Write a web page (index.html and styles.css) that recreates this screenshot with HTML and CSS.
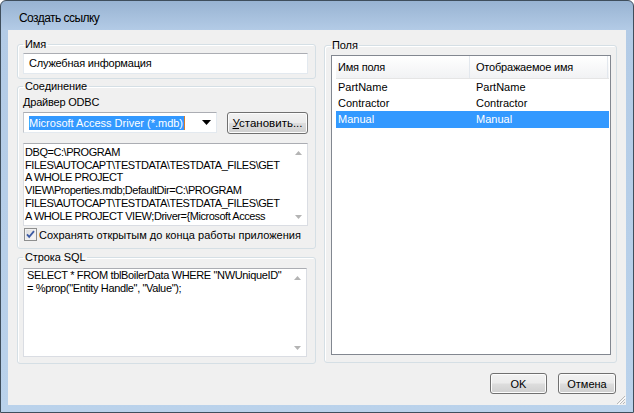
FILE: index.html
```html
<!DOCTYPE html>
<html lang="ru">
<head>
<meta charset="utf-8">
<title>Создать ссылку</title>
<link rel="stylesheet" href="styles.css">
</head>
<body>
<div class="window">
  <div class="titlebar">Создать ссылку</div>
  <div class="client">
    <div class="main">
      <div class="left">
        <fieldset class="grp grp-name">
          <legend>Имя</legend>
          <div class="textbox ru">Служебная информация</div>
        </fieldset>
        <fieldset class="grp grp-conn">
          <legend>Соединение</legend>
          <div class="label ru">Драйвер ODBC</div>
          <div class="driver-row">
            <div class="combo">
              <span class="combo-sel">Microsoft Access Driver (*.mdb)</span>
              <svg class="combo-arrow" width="9" height="5" viewBox="0 0 9 5"><path d="M0 0H9L4.5 5Z" fill="#000"/></svg>
            </div>
            <button class="btn btn-install"><u>У</u>становить...</button>
          </div>
          <div class="memo memo-conn">
            <div class="memo-text">DBQ=C:\PROGRAM<br>FILES\AUTOCAPT\TESTDATA\TESTDATA_FILES\GET<br>A WHOLE PROJECT<br>VIEW\Properties.mdb;DefaultDir=C:\PROGRAM<br>FILES\AUTOCAPT\TESTDATA\TESTDATA_FILES\GET<br>A WHOLE PROJECT VIEW;Driver={Microsoft Access</div>
            <div class="vscroll">
              <svg width="7" height="4" viewBox="0 0 7 4"><path d="M0 4L3.5 0L7 4Z" fill="#b4b4b4"/></svg>
              <svg width="7" height="4" viewBox="0 0 7 4"><path d="M0 0H7L3.5 4Z" fill="#b4b4b4"/></svg>
            </div>
          </div>
          <div class="check">
            <svg class="check-box" width="13" height="13" viewBox="0 0 13 13">
              <defs><linearGradient id="cb" x1="0" y1="0" x2="1" y2="1"><stop offset="0" stop-color="#dcdcdc"/><stop offset="1" stop-color="#fbfbfb"/></linearGradient></defs>
              <rect x="0.5" y="0.5" width="12" height="12" fill="#f4f4f4" stroke="#8e8f8f"/>
              <rect x="2" y="2" width="9" height="9" fill="url(#cb)" stroke="#e8e8e8" stroke-width="0.5"/>
              <path d="M3 6.3L5.2 8.8L10 3.2" fill="none" stroke="#3c5ba5" stroke-width="1.8"/>
            </svg>
            <span>Сохранять открытым до конца работы приложения</span>
          </div>
        </fieldset>
        <fieldset class="grp grp-sql">
          <legend>Строка SQL</legend>
          <div class="memo memo-sql">
            <div class="memo-text">SELECT * FROM tblBoilerData WHERE "NWUniqueID"<br>= %prop("Entity Handle", "Value");</div>
            <div class="vscroll">
              <svg width="7" height="4" viewBox="0 0 7 4"><path d="M0 4L3.5 0L7 4Z" fill="#b4b4b4"/></svg>
              <svg width="7" height="4" viewBox="0 0 7 4"><path d="M0 0H7L3.5 4Z" fill="#b4b4b4"/></svg>
            </div>
          </div>
        </fieldset>
      </div>
      <fieldset class="grp grp-fields">
        <legend>Поля</legend>
        <div class="listview">
          <div class="lv-header">
            <div class="lv-col1 ru">Имя поля</div>
            <div class="lv-col2 ru">Отображаемое имя</div>
          </div>
          <div class="lv-row"><div class="lv-col1">PartName</div><div class="lv-col2">PartName</div></div>
          <div class="lv-row"><div class="lv-col1">Contractor</div><div class="lv-col2">Contractor</div></div>
          <div class="lv-row selected"><div class="lv-col1">Manual</div><div class="lv-col2">Manual</div></div>
        </div>
      </fieldset>
    </div>
    <div class="buttons">
      <button class="btn btn-ok">OK</button>
      <button class="btn btn-cancel">Отмена</button>
    </div>
    <svg class="grip" width="10" height="10" viewBox="0 0 10 10">
      <g fill="#b8b8b8">
        <rect x="8" y="1" width="1" height="1"/><rect x="7" y="2" width="1" height="1"/><rect x="6" y="3" width="1" height="1"/><rect x="5" y="4" width="1" height="1"/><rect x="4" y="5" width="1" height="1"/><rect x="3" y="6" width="1" height="1"/><rect x="2" y="7" width="1" height="1"/><rect x="1" y="8" width="1" height="1"/>
        <rect x="8" y="4" width="1" height="1"/><rect x="7" y="5" width="1" height="1"/><rect x="6" y="6" width="1" height="1"/><rect x="5" y="7" width="1" height="1"/><rect x="4" y="8" width="1" height="1"/>
        <rect x="8" y="7" width="1" height="1"/><rect x="7" y="8" width="1" height="1"/>
      </g>
      <g fill="#ffffff">
        <rect x="9" y="2" width="1" height="1"/><rect x="8" y="3" width="1" height="1"/><rect x="7" y="4" width="1" height="1"/><rect x="6" y="5" width="1" height="1"/><rect x="5" y="6" width="1" height="1"/><rect x="4" y="7" width="1" height="1"/><rect x="3" y="8" width="1" height="1"/><rect x="2" y="9" width="1" height="1"/>
      </g>
    </svg>
  </div>
</div>
</body>
</html>
```
FILE: styles.css
```css
html, body {
  margin: 0;
  padding: 0;
}
body {
  width: 634px;
  height: 413px;
  overflow: hidden;
  background: #ffffff;
  font-family: "Liberation Sans", Arial, sans-serif;
  font-size: 11px;
  color: #000;
}
.ru {
  letter-spacing: -0.2px;
}
.window {
  box-sizing: border-box;
  width: 634px;
  height: 413px;
  border: 1px solid #3f4e5c;
  border-radius: 6px 6px 0 0;
  background: linear-gradient(#98b3d2 0px, #b3cbe6 29px, #bad2eb 100%);
  padding: 0 7px 7px 7px;
  display: flex;
  flex-direction: column;
}
.titlebar {
  height: 29px;
  box-sizing: border-box;
  padding: 10px 0 0 11px;
  line-height: 14px;
  font-size: 12px;
  letter-spacing: -0.55px;
  color: #000;
}
.client {
  position: relative;
  flex: 1;
  background: #f0f0f0;
  padding: 7px 9px 11px 9px;
  display: flex;
  flex-direction: column;
}
.main {
  display: flex;
  gap: 8px;
  height: 326px;
}
.left {
  width: 299px;
  display: flex;
  flex-direction: column;
}
.grp {
  margin: 0;
  border: 1px solid #d5dfe5;
  border-radius: 3px;
  padding: 0 7px 0 5px;
  min-width: 0;
  box-shadow: inset 1px 1px 0 #ffffff;
}
.grp legend {
  padding: 0 2px;
  line-height: 14px;
  height: 14px;
  letter-spacing: -0.1px;
}
.grp-name {
  padding-bottom: 4px;
}
.textbox {
  margin-top: 2px;
  box-sizing: border-box;
  height: 21px;
  background: #fff;
  border: 1px solid #e3e9ef;
  border-top-color: #abadb3;
  padding-left: 5px;
  line-height: 19px;
}
.grp-conn {
  padding-bottom: 6px;
}
.label {
  margin-top: 2px;
  line-height: 14px;
}
.driver-row {
  margin-top: 3px;
  display: flex;
  align-items: flex-start;
  gap: 10px;
}
.combo {
  box-sizing: border-box;
  width: 194px;
  height: 21px;
  background: #fff;
  border: 1px solid #e3e9ef;
  border-top-color: #abadb3;
  border-left-color: #c2c6cc;
  display: flex;
  align-items: center;
  padding-left: 5px;
  padding-right: 5px;
}
.combo-sel {
  background: #3399ff;
  color: #fff;
  line-height: 14px;
  padding-right: 1px;
  border-right: 1px solid #d9792b;
}
.combo-arrow {
  margin-left: auto;
}
.btn {
  box-sizing: border-box;
  margin: 0;
  border: 1px solid #707070;
  border-radius: 3px;
  background: linear-gradient(#f2f2f2 0%, #ebebeb 48%, #dddddd 52%, #cfcfcf 100%);
  box-shadow: inset 0 0 0 1px #fcfcfc;
  font-family: inherit;
  font-size: 11px;
  color: #000;
  padding: 0;
  line-height: 14px;
}
.btn-install {
  width: 81px;
  height: 22px;
  font-size: 11.5px;
}
.memo {
  box-sizing: border-box;
  background: #fff;
  border: 1px solid #dadde3;
  border-top-color: #abadb3;
  display: flex;
}
.memo-text {
  flex: 1;
  white-space: nowrap;
  overflow: hidden;
}
.memo-conn {
  margin-top: 9px;
  height: 83px;
}
.memo-conn .memo-text {
  padding: 2px 0 0 1px;
  line-height: 12.7px;
  letter-spacing: -0.45px;
}
.memo-sql {
  margin-top: 4px;
  height: 89px;
  width: 284px;
}
.memo-sql .memo-text {
  padding: 0 0 0 3px;
  line-height: 13px;
  letter-spacing: -0.35px;
}
.vscroll {
  width: 17px;
  flex: none;
  display: flex;
  flex-direction: column;
  justify-content: space-between;
  align-items: center;
  padding: 7px 0 6px 0;
}
.check {
  margin-top: 1px;
  height: 15px;
  display: flex;
  align-items: center;
  gap: 2px;
  padding-left: 1px;
  line-height: 14px;
  white-space: nowrap;
}
.grp-sql {
  margin-top: 1px;
  padding-bottom: 6px;
}
.grp-fields {
  width: 293px;
  box-sizing: border-box;
  margin-top: 1px;
  padding: 0 5px 7px 6px;
}
.grp-fields legend {
  padding: 0 1px;
}
.listview {
  margin-top: 3px;
  box-sizing: border-box;
  height: 300px;
  border: 1px solid #828790;
  background: #fff;
  padding: 0 1px 0 4px;
}
.lv-header {
  display: flex;
  height: 23px;
  box-sizing: border-box;
  border-bottom: 1px solid #e5e5e5;
  background: linear-gradient(#ffffff, #f1f2f4);
  line-height: 22px;
}
.lv-header .lv-col1 {
  border-right: 1px solid #e3e8ee;
}
.lv-header .lv-col2 {
  flex: 1;
  border-right: 1px solid #e3e8ee;
  margin-right: 1px;
}
.lv-col1 {
  width: 134px;
  box-sizing: border-box;
  padding-left: 2px;
}
.lv-col2 {
  padding-left: 6px;
}
.lv-row {
  display: flex;
  height: 16px;
  line-height: 16px;
}
.lv-row.selected {
  height: 17px;
  background: #3399ff;
  color: #fff;
}
.buttons {
  margin-top: 10px;
  display: flex;
  justify-content: flex-end;
  gap: 11px;
  padding-right: 1px;
}
.btn-ok {
  width: 57px;
  height: 21px;
}
.btn-cancel {
  width: 58px;
  height: 21px;
}
.grip {
  position: absolute;
  right: 0;
  bottom: 0;
}
```
